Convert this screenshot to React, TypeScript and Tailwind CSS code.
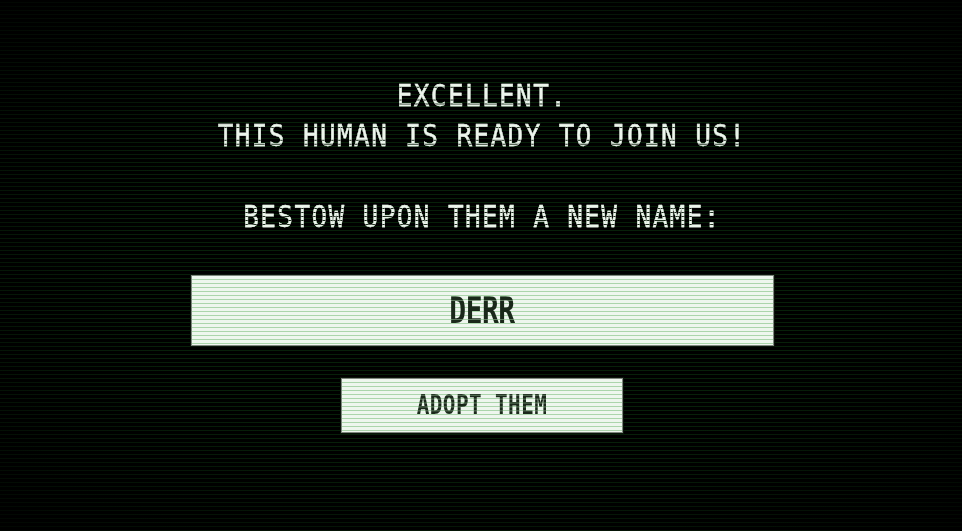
import React from "react";

// Bright phosphor text with dark scanline gaps running through the glyphs
const glowText =
  "bg-[repeating-linear-gradient(to_bottom,#edf6ed_0px,#edf6ed_2.8px,#1c2e1c_2.8px,#1c2e1c_3.5px)] bg-clip-text text-transparent [-webkit-text-stroke:0.3px_#e4efe4]";

// Dark ink on the light panels, with pale scanlines through it
const inkText =
  "bg-[repeating-linear-gradient(to_bottom,#1a281a_0px,#1a281a_2.5px,#5f7a5f_2.5px,#5f7a5f_3px)] bg-clip-text text-transparent";

const panel =
  "border border-[#7d867d] bg-[#eef6ee] bg-[repeating-linear-gradient(to_bottom,#eef6ee_0px,#eef6ee_3px,#abd5ab_3px,#abd5ab_4px)] shadow-[0_0_0_1px_#0b140b]";

export default function App() {
  return (
    <div className="relative h-[531px] w-full overflow-hidden bg-black bg-[repeating-linear-gradient(to_bottom,#000000_0px,#000000_2px,#072109_2px,#072109_3px,#000000_3px,#000000_4px)] font-['DejaVu_Sans_Mono',monospace]">
      <main className="relative z-10 flex flex-col items-center pt-[76px] pl-[2px]">
        <div className="flex origin-top scale-y-[1.15] flex-col items-center text-[26px] leading-[35px] tracking-[1.4px]">
          <p className={glowText}>EXCELLENT.</p>
          <p className={glowText}>THIS HUMAN IS READY TO JOIN US!</p>
          <p className="h-[35px]" />
          <p className={glowText}>BESTOW UPON THEM A NEW NAME:</p>
        </div>

        <div className={`mt-[59px] flex h-[71px] w-[583px] items-center justify-center ${panel}`}>
          <span
            className={`inline-block scale-y-[1.3] text-[28px] font-bold leading-none tracking-[-0.5px] ${inkText}`}
          >
            DERR
          </span>
        </div>

        <button
          type="button"
          className={`mt-[32px] flex h-[55px] w-[282px] items-center justify-center ${panel}`}
        >
          <span
            className={`inline-block scale-y-[1.3] text-[21px] font-bold leading-none tracking-[0.4px] ${inkText}`}
          >
            ADOPT THEM
          </span>
        </button>
      </main>

      {/* tube vignette */}
      <div className="pointer-events-none absolute inset-0 z-20 bg-[radial-gradient(ellipse_at_center,rgba(0,0,0,0)_50%,rgba(0,0,0,0.8)_100%)]" />
    </div>
  );
}
